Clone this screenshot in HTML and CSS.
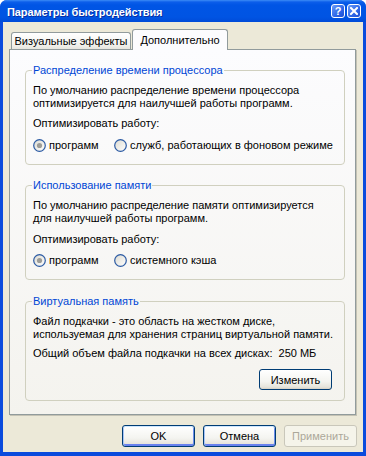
FILE: index.html
```html
<!DOCTYPE html>
<html>
<head>
<meta charset="utf-8">
<link rel="stylesheet" href="styles.css">
</head>
<body>
<div class="window">
  <div class="titlebar">
    <span class="title">Параметры быстродействия</span>
    <div class="caption-btns">
      <span class="cbtn help">?</span>
      <span class="cbtn close"><svg width="8" height="8" viewBox="0 0 8 8"><path d="M1 1 L7 7 M7 1 L1 7" stroke="#fff" stroke-width="2" stroke-linecap="square"/></svg></span>
    </div>
  </div>
  <div class="client">
    <div class="tabs">
      <div class="tab">Визуальные эффекты</div>
      <div class="tab active">Дополнительно</div>
    </div>
    <div class="panel">
      <fieldset class="group g1">
        <legend>Распределение времени процессора</legend>
        <p class="desc">По умолчанию распределение времени процессора<br>оптимизируется для наилучшей работы программ.</p>
        <p class="label">Оптимизировать работу:</p>
        <div class="radios">
          <label class="radio first"><svg class="rb" width="13" height="13" viewBox="0 0 13 13"><defs><linearGradient id="rg1" x1="0" y1="0" x2="1" y2="1"><stop offset="0" stop-color="#DCDAD0"/><stop offset="1" stop-color="#FFFFFF"/></linearGradient></defs><circle cx="6.5" cy="6.5" r="5.8" fill="url(#rg1)" stroke="#2B5AA3" stroke-width="1.2"/><circle cx="6.5" cy="6.5" r="2.6" fill="#9C9C98"/></svg>программ</label>
          <label class="radio"><svg class="rb" width="13" height="13" viewBox="0 0 13 13"><circle cx="6.5" cy="6.5" r="5.8" fill="url(#rg1)" stroke="#2B5AA3" stroke-width="1.2"/></svg>служб, работающих в фоновом режиме</label>
        </div>
      </fieldset>
      <fieldset class="group g2">
        <legend>Использование памяти</legend>
        <p class="desc">По умолчанию распределение памяти оптимизируется<br>для наилучшей работы программ.</p>
        <p class="label">Оптимизировать работу:</p>
        <div class="radios">
          <label class="radio first"><svg class="rb" width="13" height="13" viewBox="0 0 13 13"><circle cx="6.5" cy="6.5" r="5.8" fill="url(#rg1)" stroke="#2B5AA3" stroke-width="1.2"/><circle cx="6.5" cy="6.5" r="2.6" fill="#9C9C98"/></svg>программ</label>
          <label class="radio"><svg class="rb" width="13" height="13" viewBox="0 0 13 13"><circle cx="6.5" cy="6.5" r="5.8" fill="url(#rg1)" stroke="#2B5AA3" stroke-width="1.2"/></svg>системного кэша</label>
        </div>
      </fieldset>
      <fieldset class="group g3">
        <legend>Виртуальная память</legend>
        <p class="desc">Файл подкачки - это область на жестком диске,<br>используемая для хранения страниц виртуальной памяти.</p>
        <p class="label">Общий объем файла подкачки на всех дисках:&nbsp; 250 МБ</p>
        <div class="change-row">
          <button class="btn">Изменить</button>
        </div>
      </fieldset>
    </div>
    <div class="buttons">
      <button class="btn default">OK</button>
      <button class="btn default">Отмена</button>
      <button class="btn disabled">Применить</button>
    </div>
  </div>
</div>
</body>
</html>
```

FILE: styles.css
```css
html, body {
  margin: 0;
  padding: 0;
  background: #ffffff;
}
body {
  width: 366px;
  height: 456px;
  font-family: "Liberation Sans", Arial, sans-serif;
  font-size: 11px;
  color: #000;
}
.window {
  width: 366px;
  height: 456px;
  box-sizing: border-box;
  background: #0A4BDD;
  border-radius: 7px 7px 0 0;
  display: flex;
  flex-direction: column;
  overflow: hidden;
}
.titlebar {
  height: 22px;
  flex: none;
  display: flex;
  align-items: center;
  padding: 0 5px 0 7px;
  background: linear-gradient(#3C8CF6 0, #0C5EEA 2px, #0055E5 5px, #0054E3 17px, #004BD8 22px);
}
.title {
  flex: 1;
  color: #fff;
  font-weight: bold;
  font-size: 11px;
  letter-spacing: -0.1px;
  line-height: 14px;
  padding-top: 1px;
  text-shadow: 1px 1px 0 #0A2FA0;
}
.caption-btns {
  display: flex;
  gap: 2px;
}
.cbtn {
  width: 14px;
  height: 14px;
  box-sizing: border-box;
  border: 1px solid #fff;
  border-radius: 3px;
  background: linear-gradient(135deg, #6C9CF8, #2D66E8 60%, #1F4FD0);
  display: flex;
  align-items: center;
  justify-content: center;
  color: #fff;
  font-weight: bold;
  font-size: 11px;
  line-height: 12px;
}
.client {
  flex: 1;
  margin: 0 3px 4px 3px;
  background: #ECE9D8;
  padding: 7px 7px 0 6px;
  display: flex;
  flex-direction: column;
}
.tabs {
  display: flex;
  align-items: flex-end;
  height: 21px;
  padding-left: 2px;
  margin-bottom: -1px;
  position: relative;
  z-index: 1;
}
.tab {
  box-sizing: border-box;
  width: 120px;
  height: 17px;
  margin-bottom: 1px;
  border: 1px solid #919B9C;
  border-bottom: none;
  border-radius: 3px 3px 0 0;
  background: linear-gradient(#FFFFFF, #F3F3EF 70%, #E6E5DE);
  text-align: center;
  line-height: 17px;
}
.tab.active {
  width: 96px;
  height: 21px;
  margin-bottom: 0;
  margin-left: 1px;
  background: #FCFCFE;
  line-height: 20px;
}
.panel {
  border: 1px solid #919B9C;
  box-shadow: 1px 1px 0 #C4C2B4;
  background: linear-gradient(#FCFCFE, #F4F3EE);
  padding: 14px 10px 13px 15px;
}
.group {
  margin: 0;
  border: 1px solid #D0D0BF;
  border-radius: 4px;
  padding: 7px 8px 12px 7px;
  min-width: 0;
}
.g2 { margin-top: 14px; }
.g3 { margin-top: 15px; padding-bottom: 10px; }
.group legend {
  padding: 0 1px;
  margin-left: -1px;
  color: #0046D5;
  line-height: 13px;
}
p {
  margin: 0;
  line-height: 13px;
  white-space: nowrap;
}
.label { margin-top: 7px; }
.g2 .label { margin-top: 8px; }
.g3 .label { margin-top: 6px; }
.radios {
  display: flex;
  margin-top: 9px;
  height: 13px;
  align-items: center;
}
.g2 .radios { margin-top: 8px; }
.radio {
  display: flex;
  align-items: center;
  gap: 3px;
  line-height: 13px;
  white-space: nowrap;
}
.radio.first { width: 81px; }
.rb { flex: none; display: block; }
.change-row {
  display: flex;
  justify-content: flex-end;
  margin-top: 9px;
  padding-right: 4px;
}
.btn {
  box-sizing: border-box;
  width: 73px;
  height: 22px;
  border: 1px solid #003C74;
  border-radius: 3px;
  background: linear-gradient(#FFFFFF, #F4F4F0 60%, #E6E4DB 90%, #D6D0C5);
  font-family: "Liberation Sans", Arial, sans-serif;
  font-size: 11px;
  color: #000;
  padding: 0;
  margin: 0;
  line-height: 20px;
}
.change-row .btn { height: 21px; }
.btn.default {
  box-shadow: inset 0 1px 0 #CEE7FF, inset 1px 0 0 #A8C4F6, inset -1px 0 0 #6D8DEA, inset 0 -2px 0 #6982EE;
}
.btn.disabled {
  border-color: #C9C7BA;
  background: #F5F4EA;
  color: #ACA899;
}
.buttons {
  display: flex;
  justify-content: flex-end;
  gap: 8px;
  margin-top: 10px;
  margin-right: -1px;
}
```
